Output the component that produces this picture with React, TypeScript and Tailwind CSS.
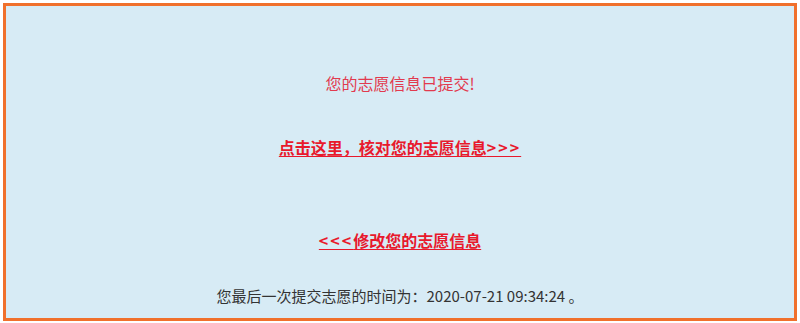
export default function App() {
  return (
    <div
      className="w-[800px] h-[323px] bg-white pt-[3px] px-[3px] pb-[2px]"
      style={{ fontFamily: '"Microsoft YaHei", "Noto Sans CJK SC", "Noto Sans", sans-serif' }}
    >
      <div className="h-full border-[3px] border-[#f0702c] bg-[#d7ebf5] flex flex-col items-center pt-[65px]">
        <div className="text-[16px] leading-[24px] text-[#e23a4e]">您的志愿信息已提交!</div>
        <a href="#" className="mt-[40px] text-[16px] leading-[24px] font-bold text-[#e8192c] underline underline-offset-2">
          点击这里，核对您的志愿信息<span className="tracking-[2px]">&gt;&gt;&gt;</span>
        </a>
        <a href="#" className="mt-[69px] text-[16px] leading-[24px] font-bold text-[#e8192c] underline underline-offset-2">
          <span className="tracking-[2px]">&lt;&lt;&lt;</span>修改您的志愿信息
        </a>
        <div className="mt-[34px] text-[15px] leading-[20px] text-[#333333]">
          您最后一次提交志愿的时间为：2020-07-21 09:34:24 。
        </div>
      </div>
    </div>
  );
}
